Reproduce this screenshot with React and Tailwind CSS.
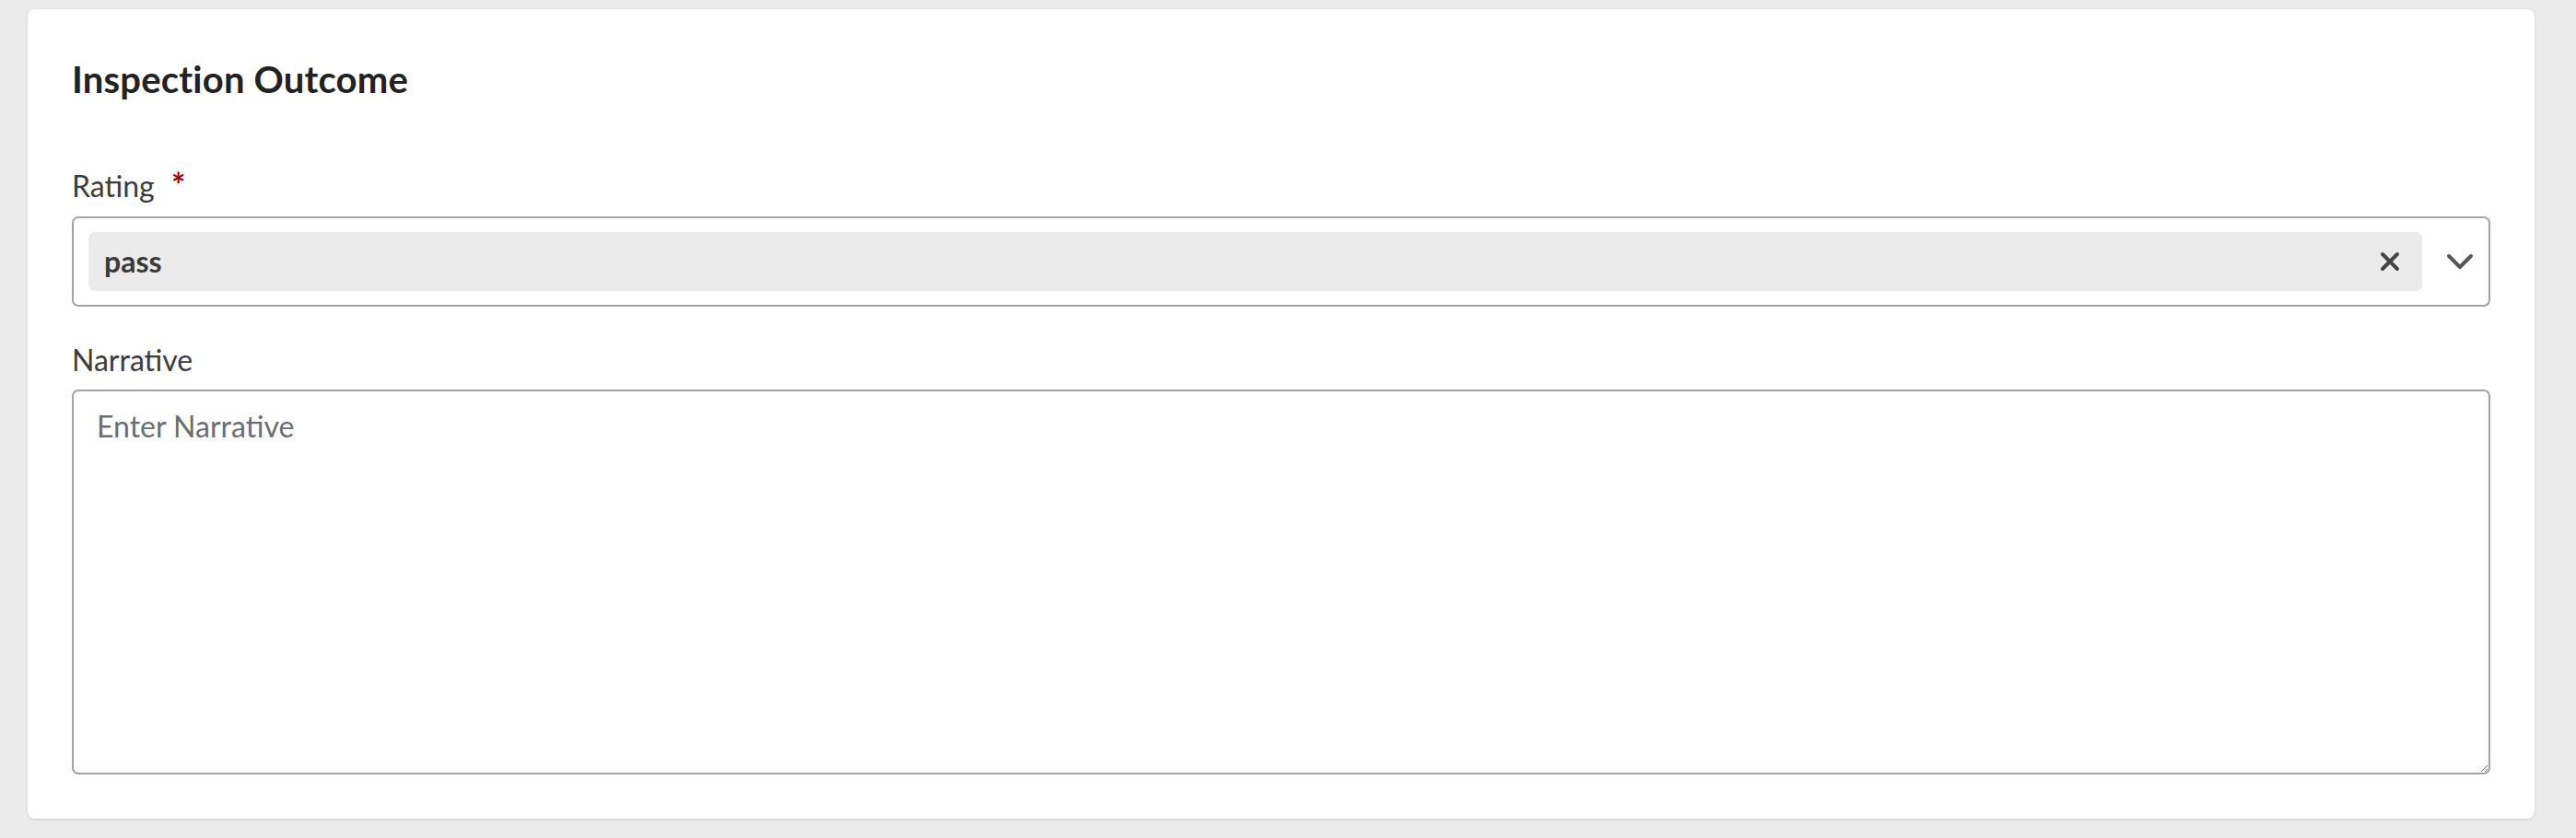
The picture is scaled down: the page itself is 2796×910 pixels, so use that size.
import React from "react";

export default function App() {
  return (
    <div className="h-[910px] overflow-hidden bg-[#ebebeb] pt-[10px] pl-[30px] pr-[45px]" style={{ fontFamily: "Lato, 'Open Sans', sans-serif" }}>
      <div className="bg-white rounded-[8px] shadow-[0_1px_3px_rgba(0,0,0,0.12)] px-[48px] pt-[52px] pb-[48px]">
        <h2 className="text-[40px] leading-[48px] font-bold text-[#222] tracking-[0.2px]">Inspection Outcome</h2>
        <div className="mt-[68px]">
          <label className="block h-[48px] text-[32px] leading-[48px] text-[#3c3c3c] mb-[9px]">
            Rating <span className="text-[#a30000] ml-[10px] text-[36px] leading-[0] font-bold">*</span>
          </label>
          <div className="h-[98px] border-2 border-[#a3a3a3] rounded-[7px] flex items-center pl-[16px]">
            <div className="flex-1 h-[64px] bg-[#ebebeb] rounded-[7px] flex items-center pl-[17px] pr-[24px]">
              <span className="flex-1 text-[32px] font-bold text-[#3a3a3a]">pass</span>
              <svg width="22" height="22" viewBox="0 0 22 22" className="text-[#444]">
                <path d="M3 3 L19 19 M19 3 L3 19" stroke="currentColor" strokeWidth="4" strokeLinecap="round" fill="none" />
              </svg>
            </div>
            <div className="w-[72px] flex justify-center pl-[10px]">
              <svg width="30" height="18" viewBox="0 0 30 18" className="text-[#555]">
                <path d="M3 3 L15 15 L27 3" stroke="currentColor" strokeWidth="4" strokeLinecap="round" strokeLinejoin="round" fill="none" />
              </svg>
            </div>
          </div>
        </div>
        <div className="mt-[34px]">
          <label className="block text-[32px] leading-[48px] text-[#3c3c3c] mb-[8px]">Narrative</label>
          <textarea
            placeholder="Enter Narrative"
            className="block w-full h-[418px] border-2 border-[#a3a3a3] rounded-[7px] px-[25px] py-[14px] text-[32px] leading-[48px] text-[#222] placeholder:text-[#6a6e73] outline-none"
          />
        </div>
      </div>
    </div>
  );
}
